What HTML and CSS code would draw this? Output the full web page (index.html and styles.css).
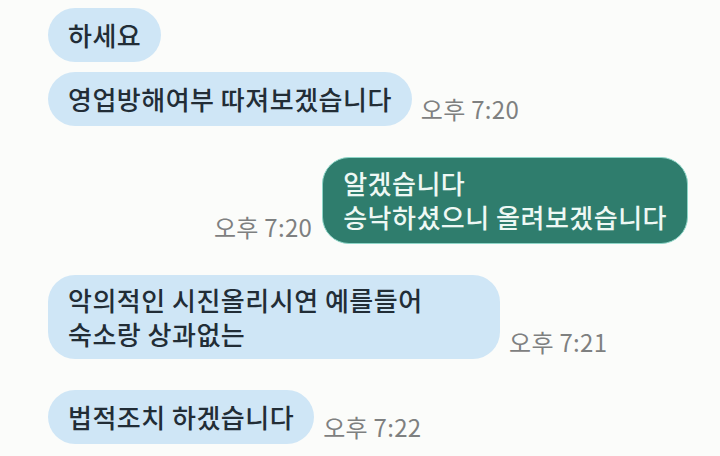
FILE: index.html
```html
<!DOCTYPE html>
<html>
<head>
  <meta charset="UTF-8" />
  <meta name="viewport" content="width=device-width, initial-scale=1.0" />
  <title>대화</title>
  <link rel="stylesheet" href="styles.css">
</head>
<body>
  <div class="chat">
    <!-- 상대방 -->
    <div class="group">
      <div class="row">
        <div class="bubble in">하세요</div>
      </div>
      <div class="row">
        <div class="bubble in">영업방해여부 따져보겠습니다</div>
        <span class="time">오후 7:20</span>
      </div>
    </div>

    <!-- 나 -->
    <div class="group">
      <div class="row mine">
        <span class="time">오후 7:20</span>
        <div class="bubble out">알겠습니다<br>승낙하셨으니 올려보겠습니다</div>
      </div>
    </div>

    <div class="group">
      <div class="row">
        <div class="bubble in wide">악의적인 시진올리시연 예를들어<br>숙소랑 상과없는</div>
        <span class="time">오후 7:21</span>
      </div>
    </div>

    <div class="group">
      <div class="row">
        <div class="bubble in">법적조치 하겠습니다</div>
        <span class="time">오후 7:22</span>
      </div>
    </div>
  </div>
</body>
</html>
```

FILE: styles.css
```css
* {
  margin: 0;
  padding: 0;
  box-sizing: border-box;
}

body {
  font-family: "Noto Sans CJK KR", "Noto Sans", sans-serif;
  background: #fbfcfa;
  color: #1f2a33;
  width: 720px;
  height: 456px;
  overflow: hidden;
}

.chat {
  display: flex;
  flex-direction: column;
  gap: 31px;
  padding: 8px 32px 0 48px;
}

.group {
  display: flex;
  flex-direction: column;
  gap: 10px;
}

.row {
  display: flex;
  align-items: flex-end;
  gap: 9px;
}

.row.mine {
  justify-content: flex-end;
  gap: 10px;
}

.bubble {
  font-size: 26px;
  font-weight: 500;
  letter-spacing: 0.5px;
  line-height: 34px;
  padding: 10px 20px;
  border-radius: 27px;
}

.bubble.wide {
  width: 452px;
  padding: 8px 20px;
}

.bubble.in {
  background: #cfe6f6;
  color: #222d36;
}

.bubble.out {
  background: #2f7d6d;
  color: #eef8f4;
  padding: 8px 20px 9px 20px;
  border: 1px solid #8fd6c8;
}

.time {
  font-size: 24px;
  letter-spacing: 0.3px;
  line-height: 1;
  color: #7e8080;
  padding-bottom: 5px;
  white-space: nowrap;
}
```
